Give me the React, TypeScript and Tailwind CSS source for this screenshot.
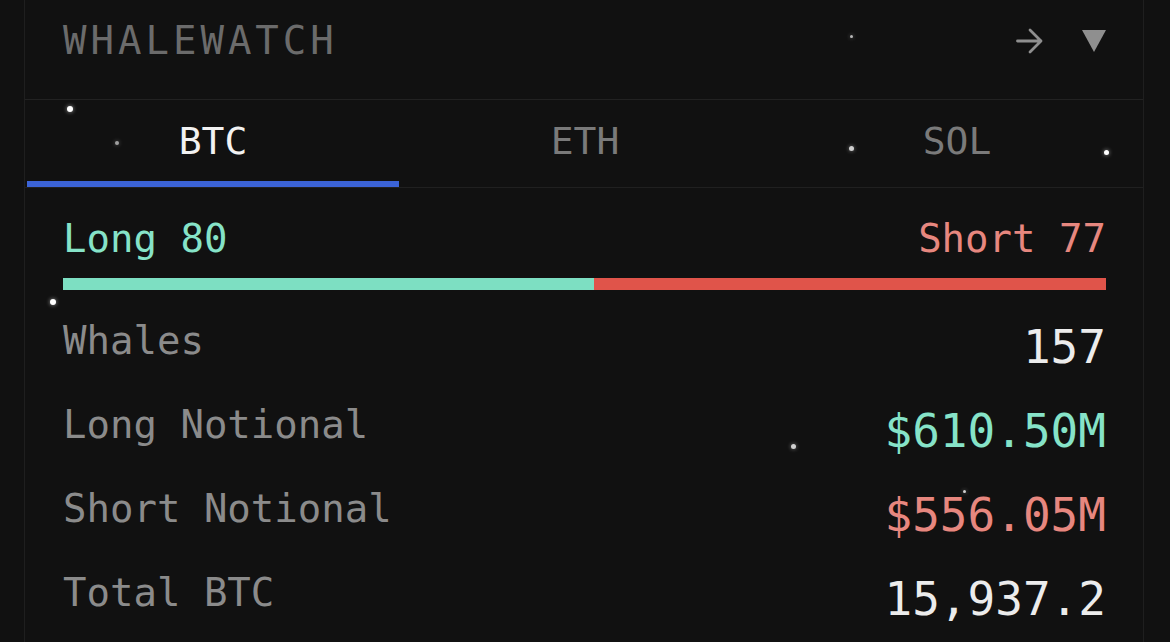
import React from "react";

const mono = { fontFamily: '"DejaVu Sans Mono", "Liberation Mono", monospace' };

const stats = [
    { label: "Whales", value: "157", color: "text-[#ececec]" },
    { label: "Long Notional", value: "$610.50M", color: "text-[#86e3c8]" },
    { label: "Short Notional", value: "$556.05M", color: "text-[#e7877f]" },
    { label: "Total BTC", value: "15,937.2", color: "text-[#ececec]" },
];

// little specks sitting over the panel
const specks = [
    { x: 70, y: 109, s: 6, o: "opacity-100" },
    { x: 117, y: 143, s: 4, o: "opacity-60" },
    { x: 851, y: 36, s: 3, o: "opacity-70" },
    { x: 851, y: 148, s: 5, o: "opacity-80" },
    { x: 1106, y: 152, s: 5, o: "opacity-100" },
    { x: 53, y: 302, s: 6, o: "opacity-100" },
    { x: 793, y: 446, s: 5, o: "opacity-80" },
    { x: 964, y: 491, s: 3, o: "opacity-80" },
];

export default function App() {
    const long = 80;
    const short = 77;
    const longPct = (long / (long + short)) * 100;

    return (
        <div className="relative h-[642px] w-full overflow-hidden bg-[#111111]" style={mono}>
            <div className="ml-[24px] flex h-full w-[1120px] flex-col border-x border-[#1f1f1f]">
                {/* header */}
                <div className="flex h-[100px] shrink-0 items-center justify-between border-b border-[#222222] pb-[18px] pl-[38px] pr-[37px]">
                    <span className="text-[39px] leading-none tracking-[4px] text-[#6b6b6b]">WHALEWATCH</span>
                    <div className="flex items-center gap-[39px]">
                        <svg width="27" height="26" viewBox="0 0 27 26" fill="none">
                            <path
                                d="M1.5 13 H25 M14 2 L25 13 L14 24"
                                stroke="#8f8f8f"
                                strokeWidth="2.8"
                                strokeLinecap="round"
                                strokeLinejoin="round"
                            />
                        </svg>
                        <svg width="24" height="22" viewBox="0 0 24 22">
                            <path d="M0 0 H24 L12 22 Z" fill="#8f8f8f" />
                        </svg>
                    </div>
                </div>

                {/* tabs */}
                <div className="grid h-[88px] shrink-0 grid-cols-3 border-b border-[#202020] pl-[2px]">
                    {["BTC", "ETH", "SOL"].map((t, i) => (
                        <div key={t} className="flex flex-col">
                            <div
                                className={`flex flex-1 items-center justify-center text-[38px] leading-none ${
                                    i === 0 ? "text-[#f2f2f2]" : "text-[#7a7a7a]"
                                }`}
                            >
                                {t}
                            </div>
                            <div className={`h-[6px] ${i === 0 ? "bg-[#3b63d6]" : "bg-transparent"}`} />
                        </div>
                    ))}
                </div>

                {/* stats */}
                <div className="flex flex-col pl-[38px] pr-[37px] pt-[31px]">
                    <div className="flex items-center justify-between text-[39px] leading-none">
                        <span className="text-[#86e3c8]">Long {long}</span>
                        <span className="text-[#e7877f]">Short {short}</span>
                    </div>
                    <div className="mt-[20px] flex h-[12px] w-full">
                        <div className="h-full bg-[#7ddfc2]" style={{ width: `${longPct}%` }} />
                        <div className="h-full flex-1 bg-[#e0544a]" />
                    </div>
                    <div className="mt-[15px] flex flex-col">
                        {stats.map((s) => (
                            <div key={s.label} className="flex h-[84px] items-center justify-between">
                                <span className="mb-[14px] text-[39px] leading-none text-[#8b8b8b]">{s.label}</span>
                                <span className={`text-[46px] leading-none ${s.color}`}>{s.value}</span>
                            </div>
                        ))}
                    </div>
                </div>
            </div>

            {specks.map((p, i) => (
                <span
                    key={i}
                    className={`absolute rounded-full bg-white shadow-[0_0_4px_rgba(255,255,255,0.6)] ${p.o}`}
                    style={{ left: p.x - p.s / 2, top: p.y - p.s / 2, width: p.s, height: p.s }}
                />
            ))}
        </div>
    );
}
